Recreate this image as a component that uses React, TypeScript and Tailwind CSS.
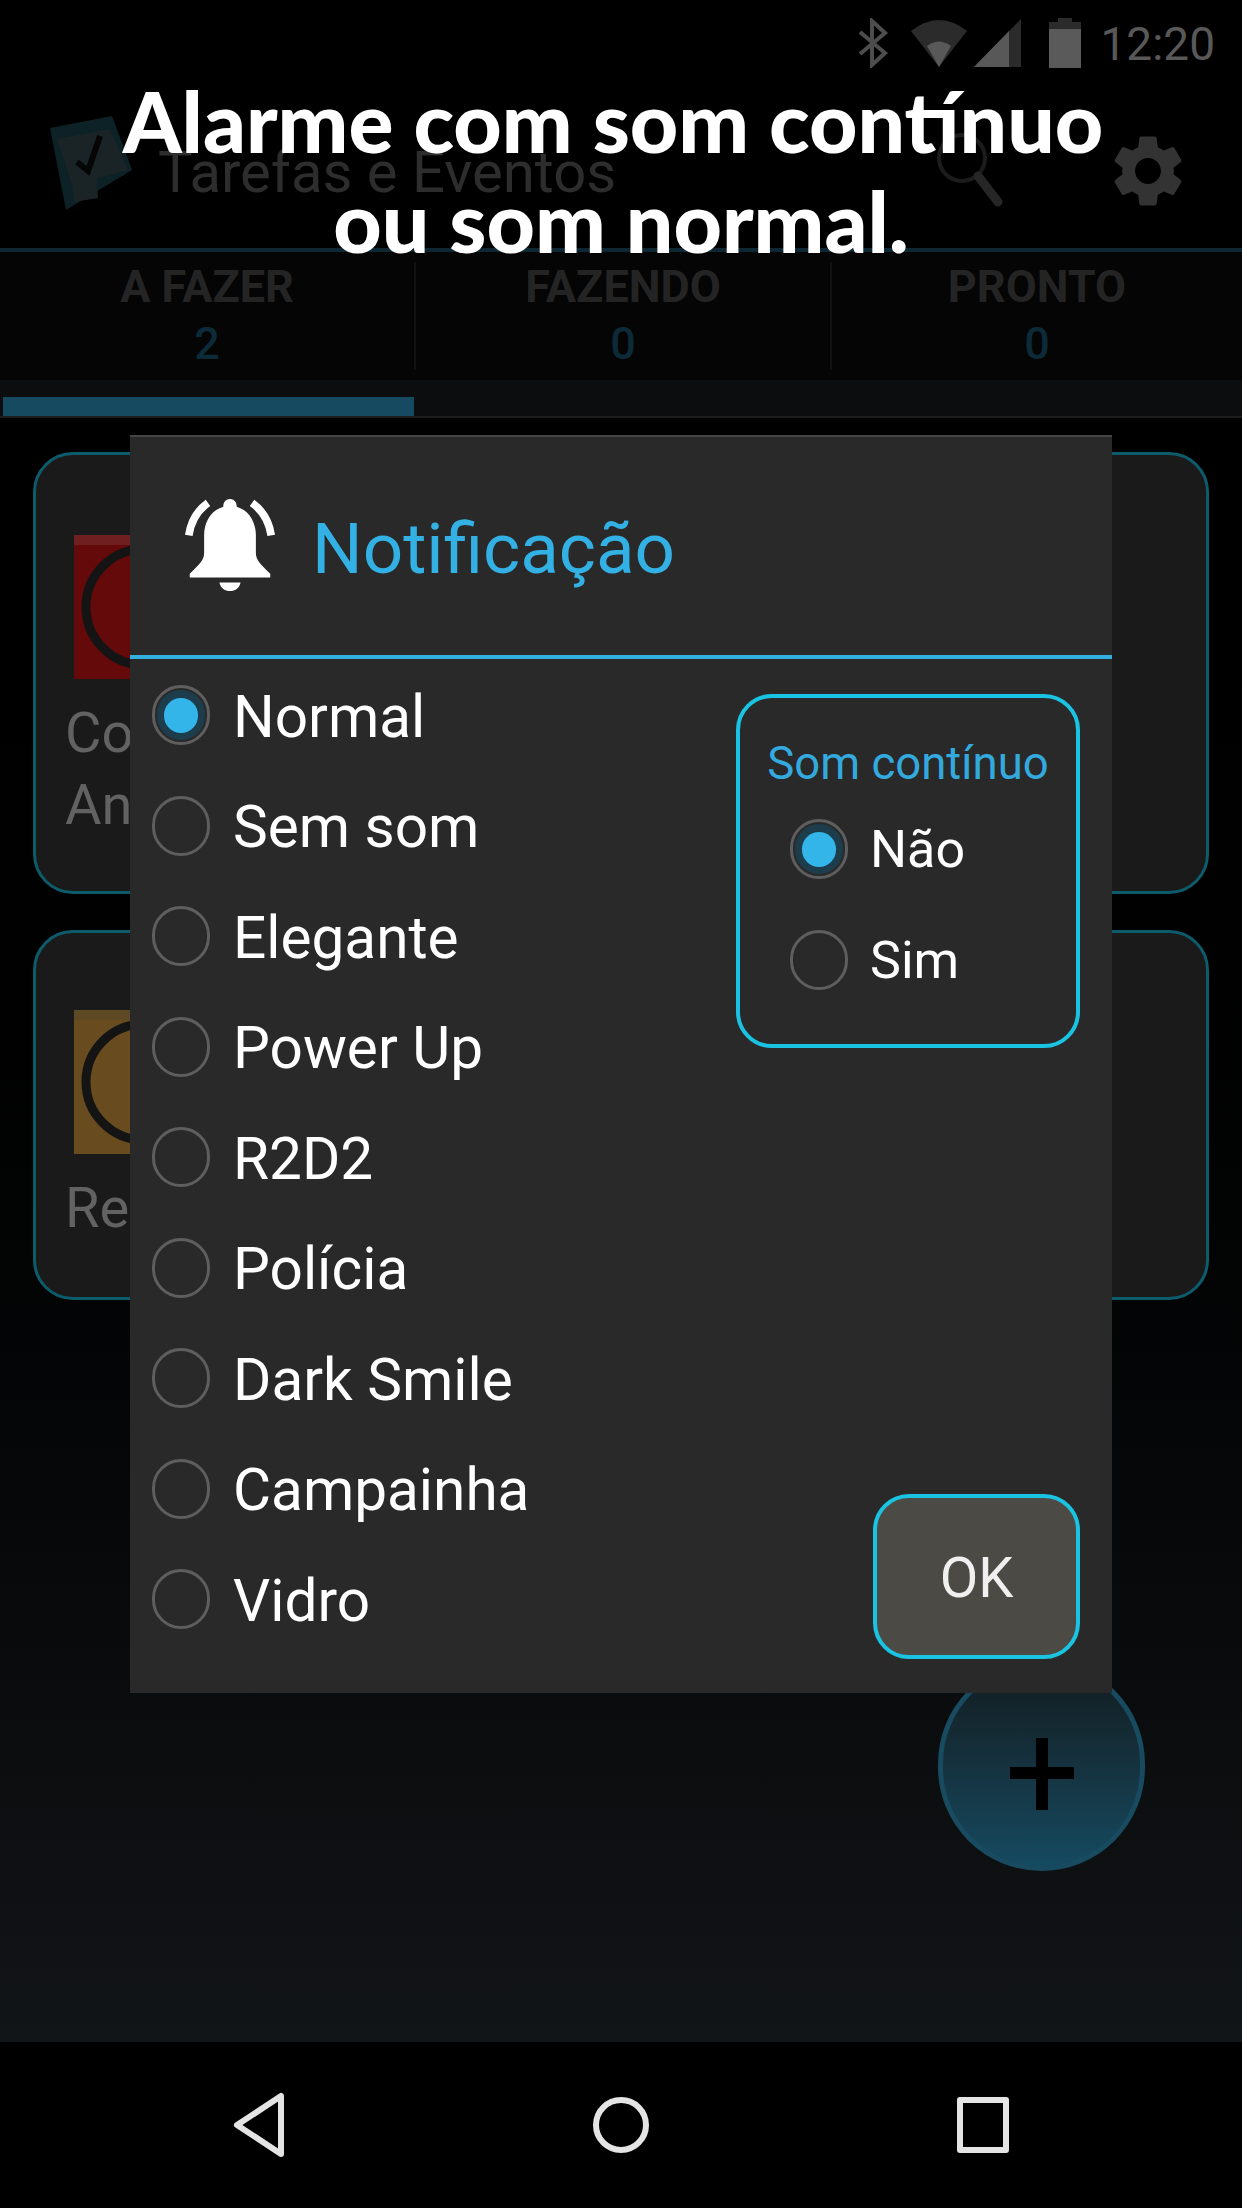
import { MdSettings } from 'react-icons/md';

const sounds = ['Normal', 'Sem som', 'Elegante', 'Power Up', 'R2D2', 'Polícia', 'Dark Smile', 'Campainha', 'Vidro'];
const tabs = [
  { label: 'A FAZER', count: 2 },
  { label: 'FAZENDO', count: 0 },
  { label: 'PRONTO', count: 0 },
];

function Radio({ checked }: { checked: boolean }) {
  return (
    <div className="w-[58px] h-[60px] shrink-0 rounded-full border-[3px] border-[#5e5e5e] flex items-center justify-center">
      {checked && (
        <div className="w-[48px] h-[50px] rounded-full bg-[#1d3d4c] flex items-center justify-center">
          <div className="w-[34px] h-[35px] rounded-full bg-[#33b5e9]" />
        </div>
      )}
    </div>
  );
}

function TaskIcon({ color, shade }: { color: string; shade: string }) {
  return (
    <svg width="120" height="144" viewBox="0 0 120 144" className="shrink-0">
      <rect x="0" y="0" width="120" height="144" fill={color} />
      <rect x="0" y="0" width="120" height="10" fill={shade} />
      <circle cx="70" cy="72" r="58" fill="none" stroke="#141414" strokeWidth="9" />
    </svg>
  );
}

function Card({ height, pad, color, shade, lines }: { height: string; pad: string; color: string; shade: string; lines: string[] }) {
  return (
    <div className={`${height} ${pad} rounded-[40px] border-[3px] border-[#0c5c6c] bg-[#1a1a1a] pl-[29px]`}>
      <div className="pl-[9px]">
        <TaskIcon color={color} shade={shade} />
      </div>
      <div className="mt-[18px] text-[56px] leading-[72px] text-[#626262] [font-family:Roboto,sans-serif]">
        {lines.map((line) => (
          <div key={line}>{line}</div>
        ))}
      </div>
    </div>
  );
}

export default function App() {
  return (
    <div className="relative w-[1242px] h-[2208px] overflow-hidden bg-black flex flex-col [font-family:Roboto,sans-serif]">
      {/* status bar */}
      <div className="h-[85px] shrink-0 flex items-center justify-end pr-[27px]">
        <svg width="32" height="50" viewBox="0 0 32 50" fill="none" stroke="#4d4d4d" strokeWidth="4">
          <path d="M3 14 L28 35 L15 47 V3 L28 15 L3 36" />
        </svg>
        <svg width="56" height="48" viewBox="0 0 56 48" className="ml-[22px]">
          <path d="M0 12 Q28 -10 56 12 L28 48 Z" fill="#2b2b2b" />
          <path d="M16 27 Q28 18 40 27 L28 48 Z" fill="#585858" />
        </svg>
        <svg width="48" height="48" viewBox="0 0 48 48" className="ml-[7px]">
          <path d="M0 48 L47 0 V48 Z" fill="#2b2b2b" />
          <path d="M0 48 L35 12 V48 Z" fill="#585858" />
        </svg>
        <svg width="32" height="50" viewBox="0 0 32 50" className="ml-[27px]">
          <path d="M9 0 H23 V4 H32 V50 H0 V4 H9 Z" fill="#2b2b2b" />
          <rect x="0" y="11" width="32" height="39" fill="#5a5a5a" />
        </svg>
        <span className="ml-[19px] mt-[3px] text-[46px] leading-none text-[#585858]">12:20</span>
      </div>

      {/* action bar */}
      <div className="h-[167px] shrink-0 flex items-center border-b-[4px] border-[#0e2733]">
        <svg width="84" height="96" viewBox="0 0 84 96" className="ml-[50px] mt-[-6px] shrink-0">
          <path d="M0 12 L62 0 L82 54 L16 94 Z" fill="#0d2226" />
          <path d="M7 23 L60 13 L78 54 L47 62 L48 82 L24 86 L22 68 Z" fill="#1a2426" />
          <path d="M27 46 L38 55 L50 20" fill="none" stroke="#060606" strokeWidth="6" />
        </svg>
        <span className="ml-[24px] mt-[10px] text-[58px] leading-none text-[#2d2d2d]">Tarefas e Eventos</span>
        <svg width="68" height="76" viewBox="0 0 68 76" fill="none" className="ml-[320px] mt-[6px] shrink-0">
          <circle cx="26" cy="26" r="23" stroke="#1c1c1c" strokeWidth="4" />
          <path d="M42 44 L62 70" stroke="#262626" strokeWidth="9" strokeLinecap="round" />
        </svg>
        <MdSettings className="ml-[101px] mt-[8px] shrink-0 text-[#333333]" size={86} />
      </div>

      {/* tabs */}
      <div className="h-[128px] shrink-0 grid grid-cols-[416px_416px_1fr] pt-[10px] bg-[#050505]">
        {tabs.map((tab, i) => (
          <div key={tab.label} className={`flex flex-col items-center h-[108px] ${i < 2 ? 'border-r-2 border-[#111111]' : ''}`}>
            <span className="text-[45px] leading-[50px] font-bold text-[#242424]">{tab.label}</span>
            <span className="mt-[7px] text-[45px] leading-[50px] font-medium text-[#0c2a38]">{tab.count}</span>
          </div>
        ))}
      </div>

      {/* tab indicator */}
      <div className="h-[38px] shrink-0 bg-[#0b0d0e] pt-[17px] border-b-2 border-[#1b1d1d]">
        <div className="ml-[3px] w-[411px] h-[19px] bg-[#154a60]" />
      </div>

      {/* list */}
      <div className="flex-1 px-[33px] pt-[34px] flex flex-col gap-[36px] bg-gradient-to-b from-black to-[#121517]">
        <Card height="h-[442px]" pad="pt-[80px]" color="#650a0a" shade="#6f1f1f" lines={['Co', 'An']} />
        <Card height="h-[370px]" pad="pt-[77px]" color="#684c1f" shade="#5d4a25" lines={['Re']} />
      </div>

      {/* nav bar */}
      <div className="h-[166px] shrink-0 bg-black grid grid-cols-3">
        <div className="flex items-center justify-end pr-[129px]">
          <svg width="52" height="66" viewBox="0 0 52 66" fill="none" stroke="#e4e4e4" strokeWidth="6" strokeLinejoin="round">
            <path d="M48 4 V62 L4 33 Z" />
          </svg>
        </div>
        <div className="flex items-center justify-center">
          <div className="w-[56px] h-[56px] rounded-full border-[6px] border-[#e4e4e4]" />
        </div>
        <div className="flex items-center justify-start pl-[129px]">
          <div className="w-[52px] h-[56px] rounded-[3px] border-[6px] border-[#e4e4e4]" />
        </div>
      </div>

      {/* add button, behind the dialog */}
      <div className="absolute left-[938px] top-[1660px] w-[207px] h-[211px] rounded-full border-[5px] border-[#184a60] bg-gradient-to-b from-[#111c20] to-[#154a60] flex items-center justify-center">
        <svg width="64" height="72" viewBox="0 0 64 72" className="mt-[16px]">
          <rect x="26" y="0" width="12" height="72" fill="#000000" />
          <rect x="0" y="29" width="64" height="12" fill="#000000" />
        </svg>
      </div>

      {/* dialog */}
      <div className="absolute left-[130px] top-[435px] w-[982px] h-[1258px] bg-[#292929] border-t-2 border-[#444444] flex flex-col">
        <div className="h-[222px] shrink-0 flex items-center border-b-[4px] border-[#33b0e0]">
          <svg width="96" height="92" viewBox="0 0 96 96" className="ml-[52px] mt-[-2px] shrink-0">
            <path d="M48 0 C53 0 55 4 55 8 C68 12 75 24 75 38 V56 C75 64 80 68 90 78 V82 H6 V78 C16 68 21 64 21 56 V38 C21 24 28 12 41 8 C41 4 43 0 48 0 Z" fill="#ffffff" />
            <path d="M37 87 H59 C58 93 53 96 48 96 C43 96 38 93 37 87 Z" fill="#ffffff" />
            <path d="M5 38 C7 24 14 12 25 4" fill="none" stroke="#ffffff" strokeWidth="8" />
            <path d="M91 38 C89 24 82 12 71 4" fill="none" stroke="#ffffff" strokeWidth="8" />
          </svg>
          <span className="ml-[34px] mt-[4px] text-[71px] leading-none text-[#33b1e4]">Notificação</span>
        </div>

        <div className="flex-1 flex justify-between">
          <div className="pl-[22px] pt-[1px]">
            {sounds.map((sound, i) => (
              <div key={sound} className="h-[110.5px] flex items-center">
                <Radio checked={i === 0} />
                <span className="ml-[23px] mt-[3px] text-[58.5px] leading-none text-white">{sound}</span>
              </div>
            ))}
          </div>

          <div className="flex flex-col justify-between items-end pt-[35px] pb-[34px] pr-[32px]">
            <div className="w-[344px] h-[354px] rounded-[36px] border-[4px] border-[#1bc3e2] pt-[38px]">
              <div className="text-center text-[45.5px] leading-[56px] text-[#33a9de]">Som contínuo</div>
              <div className="mt-[2px] pl-[50px]">
                <div className="h-[110.5px] flex items-center">
                  <Radio checked />
                  <span className="ml-[22px] mt-[2px] text-[52px] leading-none text-white">Não</span>
                </div>
                <div className="h-[110.5px] flex items-center">
                  <Radio checked={false} />
                  <span className="ml-[22px] mt-[2px] text-[52px] leading-none text-white">Sim</span>
                </div>
              </div>
            </div>
            <button className="w-[207px] h-[165px] pt-[3px] rounded-[36px] border-[4px] border-[#1bc3e2] bg-[#4b4a45] text-[56px] leading-none text-[#f0f0f0]">
              OK
            </button>
          </div>
        </div>
      </div>

      {/* caption */}
      <div className="absolute left-0 top-[71px] w-full text-center text-[84px] leading-[100px] font-black text-white [font-family:Lato,sans-serif]">
        <div className="pr-[16px]">Alarme com som contínuo</div>
        <div>ou som normal.</div>
      </div>
    </div>
  );
}
